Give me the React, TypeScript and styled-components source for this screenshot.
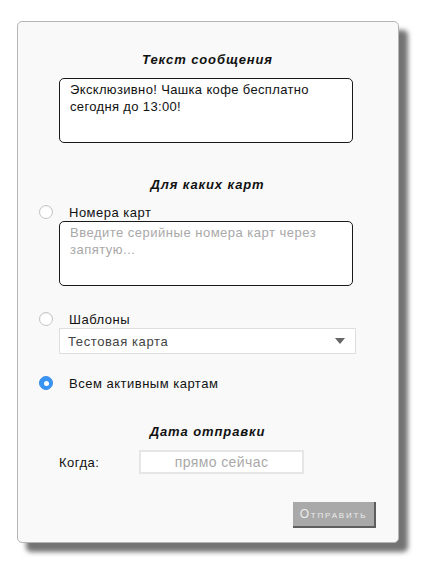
import React from "react";
import styled, { createGlobalStyle } from "styled-components";

const Global = createGlobalStyle`
  html, body { margin: 0; padding: 0; background: #ffffff; }
  body { font-family: "Liberation Sans", Arial, sans-serif; color: #111; }
  * { box-sizing: border-box; }
`;

const Page = styled.div`
  padding: 21px 0 0 17px;
  width: 425px;
  height: 566px;
`;

const Card = styled.form`
  width: 382px;
  height: 522px;
  background: #f9f9f9;
  border: 1px solid #b5b5b5;
  border-radius: 5px;
  box-shadow: 9px 9px 5px rgba(0, 0, 0, 0.55);
  padding: 30px 22px 0 21px;
  display: flex;
  flex-direction: column;
`;

const Title = styled.h3<{ $top: number }>`
  margin: ${(p) => p.$top}px 0 0 0;
  height: 16px;
  line-height: 16px;
  text-align: center;
  font-size: 13px;
  font-weight: bold;
  font-style: italic;
  letter-spacing: 0.9px;
  color: #111;
`;

const Area = styled.textarea<{ $top: number }>`
  display: block;
  margin: ${(p) => p.$top}px 0 0 20px;
  width: 294px;
  height: 65px;
  border: 1px solid #1a1a1a;
  border-radius: 5px;
  background: #fff;
  padding: 2px 10px;
  font-family: "Liberation Sans", Arial, sans-serif;
  font-size: 13px;
  line-height: 17px;
  letter-spacing: 0.35px;
  color: #111;
  resize: none;
  outline: none;
  overflow: hidden;
  &::placeholder { color: #a8a8a8; letter-spacing: 0.5px; }
`;

const RadioRow = styled.label<{ $top: number }>`
  margin-top: ${(p) => p.$top}px;
  height: 16px;
  display: flex;
  align-items: center;
  gap: 16px;
  font-size: 13px;
  letter-spacing: 0.5px;
  color: #111;
`;

const RadioDot = styled.span<{ $on?: boolean }>`
  width: 14px;
  height: 14px;
  border-radius: 50%;
  flex: none;
  display: flex;
  align-items: center;
  justify-content: center;
  background: ${(p) => (p.$on ? "#3a94f6" : "#fff")};
  border: 1px solid ${(p) => (p.$on ? "#3a8ee8" : "#c4c4c4")};
  box-shadow: ${(p) => (p.$on ? "none" : "inset 0 1px 1px rgba(0,0,0,0.06)")};
  &::after {
    content: "";
    width: 5px;
    height: 5px;
    border-radius: 50%;
    background: #fff;
    display: ${(p) => (p.$on ? "block" : "none")};
  }
`;

const Select = styled.div`
  margin: 1px 0 0 20px;
  width: 297px;
  height: 26px;
  background: #fff;
  border: 1px solid #dedede;
  display: flex;
  align-items: center;
  justify-content: space-between;
  padding: 0 10px 0 8px;
  font-size: 13px;
  letter-spacing: 0.6px;
  color: #444;
`;

const Caret = styled.span`
  width: 0;
  height: 0;
  border-left: 5px solid transparent;
  border-right: 5px solid transparent;
  border-top: 6px solid #666;
`;

const WhenRow = styled.div`
  margin: 10px 0 0 20px;
  display: flex;
  align-items: center;
  height: 24px;
`;

const WhenLabel = styled.span`
  width: 80px;
  font-size: 13px;
  letter-spacing: 0.5px;
  color: #111;
`;

const WhenInput = styled.input`
  width: 165px;
  height: 24px;
  border: 2px solid #e6e6e6;
  background: #fff;
  text-align: center;
  font-family: "Liberation Sans", Arial, sans-serif;
  font-size: 14px;
  letter-spacing: 0.4px;
  outline: none;
  &::placeholder { color: #a9a9a9; }
`;

const Footer = styled.div`
  margin-top: 28px;
  display: flex;
  justify-content: flex-end;
`;

const SendButton = styled.button`
  width: 83px;
  height: 26px;
  background: #a9a9a9;
  border: none;
  border-right: 2px solid #5e5e5e;
  border-bottom: 2px solid #5e5e5e;
  color: #ececec;
  font-family: "Liberation Sans", Arial, sans-serif;
  font-size: 12px;
  font-variant: small-caps;
  letter-spacing: 1.8px;
  padding: 0;
`;

export default function App() {
  return (
    <Page>
      <Global />
      <Card onSubmit={(e) => e.preventDefault()}>
        <Title $top={0}>Текст сообщения</Title>
        <Area
          $top={10}
          defaultValue={"Эксклюзивно! Чашка кофе бесплатно сегодня до 13:00!"}
        />
        <Title $top={34}>Для каких карт</Title>
        <RadioRow $top={11}>
          <RadioDot />
          Номера карт
        </RadioRow>
        <Area $top={1} placeholder="Введите серийные номера карт через запятую..." />
        <RadioRow $top={25}>
          <RadioDot />
          Шаблоны
        </RadioRow>
        <Select>
          <span>Тестовая карта</span>
          <Caret />
        </Select>
        <RadioRow $top={21}>
          <RadioDot $on />
          Всем активным картам
        </RadioRow>
        <Title $top={33}>Дата отправки</Title>
        <WhenRow>
          <WhenLabel>Когда:</WhenLabel>
          <WhenInput placeholder="прямо сейчас" />
        </WhenRow>
        <Footer>
          <SendButton type="submit">Отправить</SendButton>
        </Footer>
      </Card>
    </Page>
  );
}
